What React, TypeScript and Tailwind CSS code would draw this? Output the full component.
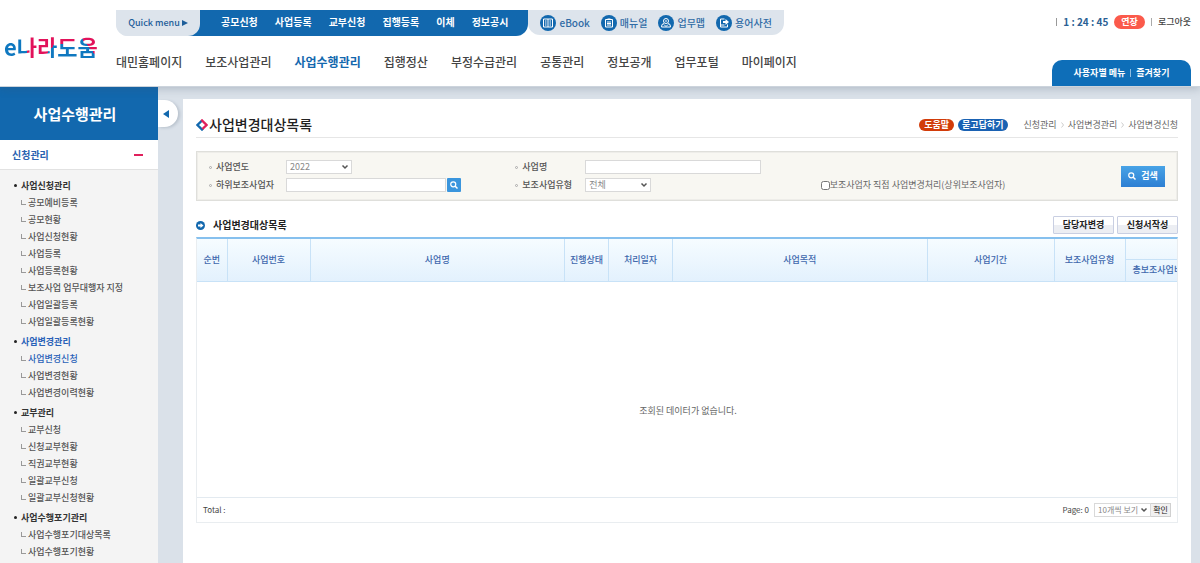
import { useState } from 'react';
import type { ReactNode, SelectHTMLAttributes } from 'react';
import clsx from 'clsx';

type MenuGroup = { title: string; items: string[] };

const quickLinks = ['공모신청', '사업등록', '교부신청', '집행등록', '이체', '정보공시'];

const mainMenu = [
  '대민홈페이지',
  '보조사업관리',
  '사업수행관리',
  '집행정산',
  '부정수급관리',
  '공통관리',
  '정보공개',
  '업무포털',
  '마이페이지',
];

const sideMenu: MenuGroup[] = [
  {
    title: '사업신청관리',
    items: [
      '공모예비등록',
      '공모현황',
      '사업신청현황',
      '사업등록',
      '사업등록현황',
      '보조사업 업무대행자 지정',
      '사업일괄등록',
      '사업일괄등록현황',
    ],
  },
  { title: '사업변경관리', items: ['사업변경신청', '사업변경현황', '사업변경이력현황'] },
  {
    title: '교부관리',
    items: ['교부신청', '신청교부현황', '직권교부현황', '일괄교부신청', '일괄교부신청현황'],
  },
  { title: '사업수행포기관리', items: ['사업수행포기대상목록', '사업수행포기현황'] },
];

const columns = ['순번', '사업번호', '사업명', '진행상태', '처리일자', '사업목적', '사업기간', '보조사업유형'];

function CircleIcon({ children }: { children: ReactNode }) {
  return (
    <svg viewBox="0 0 32 32" className="size-4 shrink-0" fill="none" stroke="#fff" strokeWidth="2" aria-hidden="true">
      <circle cx="16" cy="16" r="16" fill="#1268ae" stroke="none" />
      {children}
    </svg>
  );
}

const helpLinks = [
  {
    label: 'eBook',
    icon: (
      <CircleIcon>
        <path d="M7 8h18v16H7zM16 8v16M10 12h3M10 16h3M10 20h3M19 12h3M19 16h3M19 20h3" />
      </CircleIcon>
    ),
  },
  {
    label: '매뉴얼',
    icon: (
      <CircleIcon>
        <path d="M9 9h14v15H9zM13 8h6M12 14h8M12 17h8M12 20h8" />
      </CircleIcon>
    ),
  },
  {
    label: '업무맵',
    icon: (
      <CircleIcon>
        <circle cx="16" cy="12" r="5" />
        <path d="M12 17l-4 2-1 5h18l-1-5-4-2M12 19l4 4 4-4M14 12h4" />
      </CircleIcon>
    ),
  },
  {
    label: '용어사전',
    icon: (
      <CircleIcon>
        <path d="M17 8H9v16h14v-5M9 20h8" />
        <path d="M14 12h5V8l7 6-7 6v-4h-5z" fill="#fff" stroke="none" />
      </CircleIcon>
    ),
  },
];

function SearchIcon() {
  return (
    <svg viewBox="0 0 16 16" className="size-2 shrink-0" fill="none" stroke="#fff" strokeWidth="2.500" aria-hidden="true">
      <circle cx="6.500" cy="6.500" r="5" />
      <path d="M10 10l5 5" strokeWidth="3" />
    </svg>
  );
}

function Select({ className, children, ...props }: SelectHTMLAttributes<HTMLSelectElement>) {
  return (
    <span className="relative flex">
      <select
        {...props}
        className={clsx('h-[14px] appearance-none border border-[#d9d9d9] bg-white pl-[3px] leading-3 text-[#888]', className)}
      >
        {children}
      </select>
      <svg viewBox="0 0 8 6" className="pointer-events-none absolute top-1 right-[3px] h-[6px] w-2" fill="none" stroke="#555" strokeWidth="1.500" aria-hidden="true">
        <path d="M1.500 1.500L4 4l2.500-2.500" />
      </svg>
    </span>
  );
}

function Logo() {
  return (
    <a href="#" className="flex text-[22px] leading-6 font-bold">
      <span className="bg-[#0f78c0] bg-clip-text text-transparent">e</span>
      <span className="bg-linear-to-r from-[#0f78c0] from-50% to-[#e2125a] to-50% bg-clip-text text-transparent">나</span>
      <span className="bg-linear-to-br from-[#e2125a] from-65% to-[#0f78c0] to-65% bg-clip-text text-transparent">라</span>
      <span className="bg-linear-to-b from-[#e2125a] from-40% to-[#0f78c0] to-40% bg-clip-text text-transparent">도</span>
      <span className="bg-linear-to-tr from-[#0f78c0] from-50% to-[#e2125a] to-50% bg-clip-text text-transparent">움</span>
    </a>
  );
}

function Header() {
  return (
    <header className="relative z-10 flex h-[87px] border-b border-[#ccd4dc] bg-white pr-[9px] shadow-[0_2px_8px_rgba(60,80,100,0.25)]">
      <div className="w-[116px] shrink-0 pt-[34px] pl-1">
        <Logo />
      </div>
      <div className="flex-1 pt-[10px] whitespace-nowrap">
        <div className="flex text-[10px] leading-6">
          <div className="flex rounded-b-xl bg-linear-to-r from-[#dde4ec] from-10% to-[#1268ae] to-10%">
            <button type="button" className="flex w-[84px] items-center justify-center gap-[2px] rounded-b-xl bg-[#dde4ec] text-[9px] font-medium text-[#1d5d99]">
              Quick menu
              <svg viewBox="0 0 6 6" className="size-[6px]" fill="#1d5d99" aria-hidden="true">
                <path d="M0 0l6 3-6 3z" />
              </svg>
            </button>
            <nav className="flex h-[26px] gap-[17px] rounded-br-xl pr-5 pl-[21px] font-bold text-white">
              {quickLinks.map((link) => (
                <a key={link} href="#">{link}</a>
              ))}
            </nav>
          </div>
          <nav className="flex h-[25px] gap-[11px] rounded-b-xl bg-[#dde4ec] px-3 font-medium text-[#2f6ba5]">
            {helpLinks.map(({ label, icon }) => (
              <a key={label} href="#" className="flex items-center gap-[3px]">
                {icon}
                {label}
              </a>
            ))}
          </nav>
        </div>
        <nav className="mt-4 flex gap-[23px] text-[12px] leading-5 font-medium text-[#444]">
          {mainMenu.map((menu) => (
            <a key={menu} href="#" className={clsx(menu === '사업수행관리' && 'font-bold text-[#1268ae]')}>
              {menu}
            </a>
          ))}
        </nav>
      </div>
      <div className="flex w-[139px] shrink-0 flex-col justify-between whitespace-nowrap">
        <div className="mt-[15px] flex items-center justify-end gap-[6px] text-[9px] leading-[14px] text-[#444]">
          <span className="h-2 w-px bg-[#999]" />
          <span className="text-[10px] font-bold text-[#2b5f94]">1 : 24 : 45</span>
          <button type="button" className="rounded-full bg-[#fb5a4b] px-[7px] font-bold text-white">연장</button>
          <span className="h-2 w-px bg-[#aaa]" />
          <a href="#" className="font-medium">로그아웃</a>
        </div>
        <div className="flex h-[26px] items-center justify-center gap-[5px] rounded-t-[10px] bg-[#0e6eb8] text-[9px] font-bold text-white">
          <a href="#">사용자별 메뉴</a>
          <span className="h-2 w-px bg-[#8fbde0]" />
          <a href="#">즐겨찾기</a>
        </div>
      </div>
    </header>
  );
}

function Sidebar() {
  return (
    <aside className="relative w-[158px] shrink-0 bg-[#f4f4f4]">
      <h2 className="bg-[#1268ae] pr-2 text-center text-[15px] leading-[53px] font-bold text-white">사업수행관리</h2>
      <button type="button" className="flex h-[30px] w-full items-center justify-between border-b border-[#e2e2e2] bg-white pr-[15px] pl-3 text-[10px] font-bold text-[#2a62b0]">
        신청관리
        <span className="h-[2px] w-[9px] bg-[#e0205c]" />
      </button>
      <div className="flex flex-col gap-[3px] pt-[7px] pb-1 pl-[14px] text-[9px] leading-[17px] text-[#555]">
        {sideMenu.map((group) => (
          <div key={group.title}>
            <h3 className={clsx('flex items-center gap-1 font-bold', group.title === '사업변경관리' ? 'text-[#2a62b8]' : 'text-[#333]')}>
              <span className="size-[3px] rounded-full bg-[#222]" />
              {group.title}
            </h3>
            <ul className="pl-[7px]">
              {group.items.map((item) => (
                <li key={item}>
                  <a href="#" className={clsx('flex items-center gap-[2px] font-medium', item === '사업변경신청' && 'text-[#2a62b8]')}>
                    <span className="h-[5px] w-[5px] border-b border-l border-[#999]" />
                    {item}
                  </a>
                </li>
              ))}
            </ul>
          </div>
        ))}
      </div>
      <button type="button" aria-label="메뉴 접기" className="absolute top-[13px] left-full flex h-[27px] w-5 items-center rounded-r-full bg-white pl-[5px] shadow-[2px_1px_3px_rgba(60,80,100,0.2)]">
        <svg viewBox="0 0 6 8" className="h-2 w-[6px]" fill="#1268ae" aria-hidden="true">
          <path d="M6 0v8L0 4z" />
        </svg>
      </button>
    </aside>
  );
}

function FieldLabel({ htmlFor, className, children }: { htmlFor: string; className: string; children: ReactNode }) {
  return (
    <label htmlFor={htmlFor} className={clsx('flex shrink-0 items-center gap-1 font-medium text-[#555]', className)}>
      <span className="size-[3px] rounded-full border border-[#aaa]" />
      {children}
    </label>
  );
}

function SearchForm() {
  const [direct, setDirect] = useState(false);

  return (
    <form className="mt-[13px] flex items-center border border-[#dfdfdb] bg-[#f8f7f2] px-3 py-[7px] text-[9px] leading-4 shadow-[inset_0_0_0_1px_#eeede9]">
      <div className="grid flex-1 grid-cols-[306fr_305fr_300fr] gap-y-[2px]">
        <div className="flex items-center">
          <FieldLabel htmlFor="year" className="w-[77px]">사업연도</FieldLabel>
          <Select id="year" className="w-[66px]">
            <option>2022</option>
          </Select>
        </div>
        <div className="flex items-center">
          <FieldLabel htmlFor="bizName" className="w-[70px]">사업명</FieldLabel>
          <input id="bizName" type="text" className="h-[14px] w-[176px] border border-[#d9d9d9] bg-white px-1" />
        </div>
        <div />
        <div className="flex items-center">
          <FieldLabel htmlFor="operator" className="w-[77px]">하위보조사업자</FieldLabel>
          <input id="operator" type="text" className="h-[14px] w-40 border border-[#d9d9d9] bg-white px-1" />
          <button type="button" aria-label="하위보조사업자 찾기" className="ml-px flex size-[14px] items-center justify-center rounded-[1px] bg-[#3a95dd]">
            <SearchIcon />
          </button>
        </div>
        <div className="flex items-center">
          <FieldLabel htmlFor="bizType" className="w-[70px]">보조사업유형</FieldLabel>
          <Select id="bizType" className="w-[66px]">
            <option>전체</option>
          </Select>
        </div>
        <label className="flex items-center text-[#666]">
          <input type="checkbox" checked={direct} onChange={(e) => setDirect(e.target.checked)} className="size-[9px]" />
          보조사업자 직접 사업변경처리(상위보조사업자)
        </label>
      </div>
      <button type="submit" className="flex h-[21px] w-11 items-center justify-center gap-[5px] bg-linear-to-b from-[#48a3e6] to-[#2d7fd3] font-bold text-white">
        <SearchIcon />
        검색
      </button>
    </form>
  );
}

function ResultGrid() {
  return (
    <div className="border border-t-2 border-[#e9edf0] border-t-[#86c0ee] text-[9px] leading-4">
      <div className="overflow-hidden">
        <table className="w-full min-w-[1002px] table-fixed border-collapse">
          <colgroup>
            <col className="w-[30px]" />
            <col className="w-[83px]" />
            <col />
            <col className="w-[44px]" />
            <col className="w-[64px]" />
            <col />
            <col className="w-[127px]" />
            <col className="w-[71px]" />
            <col className="w-[74px]" />
          </colgroup>
          <thead className="bg-linear-to-b from-[#f6fcff] to-[#e3f1fd] text-[#4068ad]">
            <tr className="h-5">
              {columns.map((column) => (
                <th key={column} rowSpan={2} className="border-r border-b border-[#c8e2f7] p-0 font-medium">
                  {column}
                </th>
              ))}
              <th className="border-b border-[#c8e2f7] p-0" />
            </tr>
            <tr className="h-[22px]">
              <th className="border-b border-[#c8e2f7] p-0 pl-[7px] text-left font-medium whitespace-nowrap">총보조사업비</th>
            </tr>
          </thead>
          <tbody>
            <tr>
              <td colSpan={9} className="h-[216px] pt-11 pr-5 text-center text-[#666]">
                조회된 데이터가 없습니다.
              </td>
            </tr>
          </tbody>
        </table>
      </div>
      <div className="flex h-[25px] items-center border-t border-[#e3eaf0] px-[6px] text-[8px] text-[#444]">
        <span className="flex-1">Total :</span>
        <span className="mr-[5px]">Page: 0</span>
        <Select aria-label="페이지당 건수" className="w-[57px]">
          <option>10개씩 보기</option>
        </Select>
        <button type="button" className="h-[14px] w-5 border border-l-0 border-[#d0d0d0] bg-[#f1f1f1] leading-3 text-[#222]">확인</button>
      </div>
    </div>
  );
}

export default function App() {
  return (
    <div className="flex min-h-screen flex-col bg-[#dae1e9] font-['Noto_Sans_CJK_KR',sans-serif]">
      <Header />
      <div className="flex flex-1">
        <Sidebar />
        <main className="mt-3 mr-[9px] ml-[25px] min-w-0 flex-1 bg-white px-[13px] pt-[13px]">
          <div className="flex items-center border-b border-[#e6e6e6] text-[9px] leading-[25px]">
            <svg viewBox="0 0 12 12" className="mr-px size-3 shrink-0" fill="none" strokeWidth="2.400" aria-hidden="true">
              <path d="M7 9.500L6 10.500 1.500 6 6 1.500" stroke="#1268ae" />
              <path d="M5.500 2L6 1.500 10.500 6 6.500 10" stroke="#e0205c" />
            </svg>
            <h1 className="flex-1 text-[14px] font-medium text-[#222]">사업변경대상목록</h1>
            <div className="flex gap-1 leading-3 font-bold text-white">
              <button type="button" className="rounded-full bg-[#d23c0a] px-[5px]">도움말</button>
              <button type="button" className="rounded-full bg-[#1a62b3] px-1">묻고답하기</button>
            </div>
            <nav className="ml-4 flex items-center gap-1 text-[#666]">
              <a href="#">신청관리</a>
              <svg viewBox="0 0 3 6" className="h-[6px] w-[3px]" fill="none" stroke="#ccc" aria-hidden="true"><path d="M.5.5L2.500 3 .5 5.500" /></svg>
              <a href="#">사업변경관리</a>
              <svg viewBox="0 0 3 6" className="h-[6px] w-[3px]" fill="none" stroke="#ccc" aria-hidden="true"><path d="M.5.5L2.500 3 .5 5.500" /></svg>
              <a href="#">사업변경신청</a>
            </nav>
          </div>

          <SearchForm />

          <section>
            <div className="flex h-9 items-end gap-[3px] pb-[3px] text-[9px]">
              <h2 className="flex flex-1 items-center gap-2 text-[10px] leading-[18px] font-bold text-[#222]">
                <svg viewBox="0 0 18 18" className="size-[9px]" aria-hidden="true">
                  <circle cx="9" cy="9" r="9" fill="#1268ae" />
                  <path d="M4 7h5V4l6 5-6 5v-3H4z" fill="#fff" />
                </svg>
                사업변경대상목록
              </h2>
              {['담당자변경', '신청서작성'].map((label) => (
                <button
                  key={label}
                  type="button"
                  className="h-[18px] w-[61px] rounded-[1px] border border-[#c9cfe2] bg-linear-to-b from-white from-50% to-[#eceef3] to-50% leading-4 font-bold text-[#222]"
                >
                  {label}
                </button>
              ))}
            </div>
            <ResultGrid />
          </section>
        </main>
      </div>
    </div>
  );
}
